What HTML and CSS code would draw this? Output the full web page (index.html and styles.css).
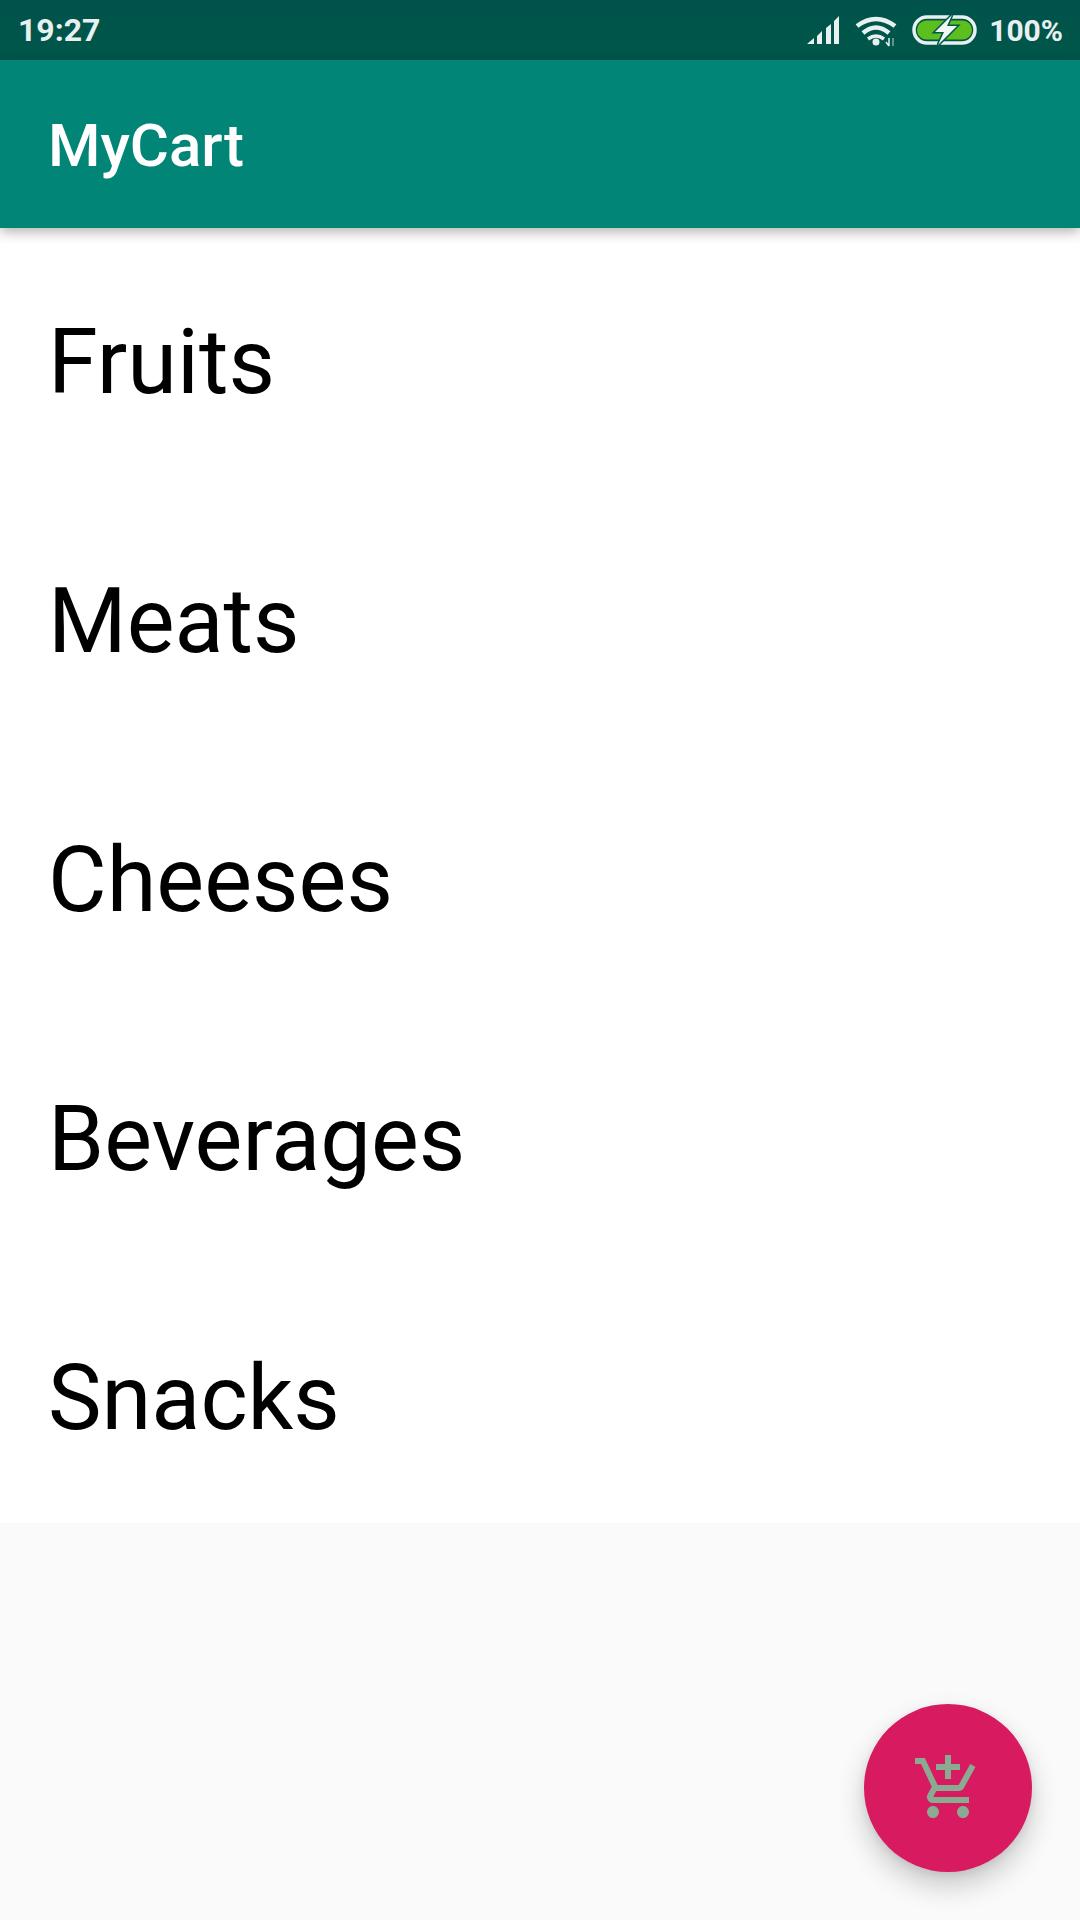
FILE: index.html
```html
<!DOCTYPE html>
<html lang="en">
<head>
    <meta charset="UTF-8">
    <meta name="viewport" content="width=device-width, initial-scale=1.0">
    <title>MyCart</title>
    <link rel="stylesheet" href="styles.css">
</head>
<body>
    <div class="statusBar">
        <span class="time">19:27</span>
        <div class="statusIcons">
            <svg class="signal" width="34" height="30" viewBox="0 0 34 30">
                <path d="M0 29 L7 23 V29 Z M10 21 L15 16 V29 H10 Z M19 13 L24 9 V29 H19 Z M27 6 L32 1 V29 H27 Z" fill="#e8f1ef"/>
            </svg>
            <svg class="wifi" width="50" height="34" viewBox="0 0 50 34">
                <path d="M2 13 Q21 -1 40 13" fill="none" stroke="#e8f1ef" stroke-width="4.500"/>
                <path d="M8 20 Q21 9 34 20" fill="none" stroke="#e8f1ef" stroke-width="4.500"/>
                <path d="M13 26 Q21 20 29 26" fill="none" stroke="#e8f1ef" stroke-width="3.500"/>
                <circle cx="21" cy="29" r="3.500" fill="#e8f1ef"/>
                <path d="M34 25 V33 M31 29 L34 33" fill="none" stroke="#e8f1ef" stroke-width="1.500"/>
                <path d="M38 33 V25" fill="none" stroke="#7fa8a0" stroke-width="1.500"/>
            </svg>
            <svg class="battery" width="66" height="30" viewBox="0 0 66 30">
                <rect x="2" y="2" width="61" height="26" rx="13" fill="none" stroke="#e8f1ef" stroke-width="3.500"/>
                <rect x="5" y="5.500" width="55" height="19" rx="9.500" fill="#5cbf1e"/>
                <path d="M40 0 L23 17 H32 L26 30 L45 11 H35 Z" fill="#f2f7f5" stroke="#00574b" stroke-width="3" paint-order="stroke"/>
            </svg>
            <span class="percent">100%</span>
        </div>
    </div>

    <div class="toolbar">
        <span class="appTitle">MyCart</span>
    </div>

    <div class="categoryList">
        <div class="categoryItem">Fruits</div>
        <div class="categoryItem">Meats</div>
        <div class="categoryItem">Cheeses</div>
        <div class="categoryItem">Beverages</div>
        <div class="categoryItem">Snacks</div>
    </div>

    <button class="fab">
        <svg width="72" height="72" viewBox="0 0 24 24">
            <path fill="#8aab92" d="M11 9h2V6h3V4h-3V1h-2v3H8v2h3v3zm-4 9c-1.100 0-1.990.9-1.990 2S5.900 22 7 22s2-.9 2-2-.9-2-2-2zm10 0c-1.100 0-1.990.9-1.990 2s.89 2 1.990 2 2-.9 2-2-.9-2-2-2zm-9.830-3.250l.03-.12.9-1.630h7.450c.75 0 1.410-.41 1.750-1.030l3.860-7.010L19.420 4h-.01l-1.100 2-2.760 5H8.530l-.13-.27L6.160 6l-.95-2-.94-2H1v2h2l3.600 7.590-1.350 2.450c-.16.28-.25.61-.25.96 0 1.100.9 2 2 2h12v-2H7.420c-.13 0-.25-.11-.25-.25z"/>
        </svg>
    </button>
</body>
</html>
```

FILE: styles.css
```css
body {
    margin: 0;
    height: 1920px;
    overflow: hidden;
    display: flex;
    flex-direction: column;
    background: #fafafa;
    font-family: Roboto, sans-serif;
}

.statusBar {
    height: 60px;
    padding: 0 17px 0 18px;
    display: flex;
    align-items: center;
    justify-content: space-between;
    background: linear-gradient(#00524a, #00574b);
    color: #e8f1ef;
    font-weight: 700;
}

.time {
    font-size: 32px;
}

.percent {
    font-size: 30px;
}

.statusIcons {
    display: flex;
    align-items: center;
}

.signal {
    margin-right: 14px;
}

.wifi {
    margin-right: 7px;
}

.battery {
    margin-right: 11px;
}

.toolbar {
    position: relative;
    height: 168px;
    padding-left: 48px;
    display: flex;
    align-items: center;
    background: #008577;
    box-shadow: 0 4px 12px rgba(0,0,0,0.3);
}

.appTitle {
    font-size: 60px;
    font-weight: 500;
    color: white;
    padding-top: 3px;
}

.categoryList {
    background: white;
}

.categoryItem {
    box-sizing: border-box;
    height: 259px;
    padding: 9px 0 0 48px;
    display: flex;
    align-items: center;
    font-size: 90.2px;
    color: black;
}

.fab {
    position: absolute;
    left: 864px;
    top: 1704px;
    width: 168px;
    height: 168px;
    padding: 0;
    border: none;
    border-radius: 50%;
    display: flex;
    align-items: center;
    justify-content: center;
    background: #d81b60;
    box-shadow: 0 14px 28px rgba(0,0,0,0.2), 0 3px 8px rgba(0,0,0,0.08);
}
```
